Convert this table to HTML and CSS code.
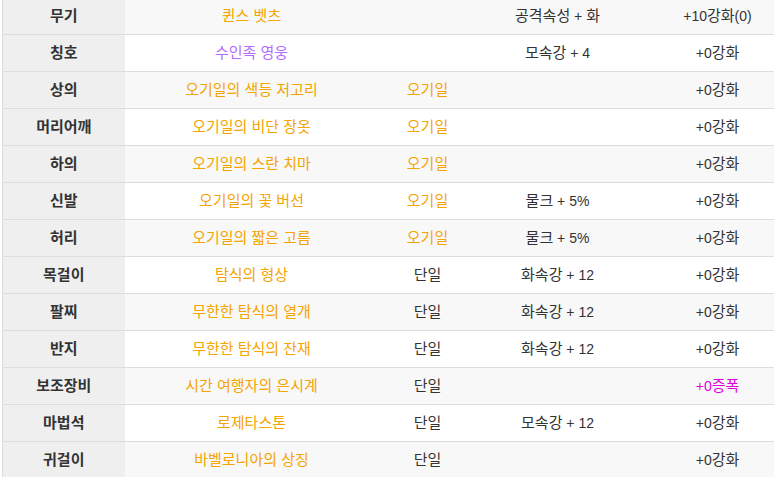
FILE: index.html
```html
<!DOCTYPE html>
<html lang="ko">
<head>
<meta charset="utf-8">
<link rel="stylesheet" href="styles.css">
</head>
<body>
<table class="equip">
  <colgroup>
    <col class="c1"><col class="c2"><col class="c3"><col class="c4"><col class="c5">
  </colgroup>
  <tbody>
    <tr><th>무기</th><td class="epic">퀸스 벳츠</td><td></td><td>공격속성<span class="n"> + </span>화</td><td><span class="n">+10</span>강화<span class="n">(0)</span></td></tr>
    <tr><th>칭호</th><td class="rare">수인족 영웅</td><td></td><td>모속강<span class="n"> + 4</span></td><td><span class="n">+0</span>강화</td></tr>
    <tr><th>상의</th><td class="epic">오기일의 색등 저고리</td><td class="epic">오기일</td><td></td><td><span class="n">+0</span>강화</td></tr>
    <tr><th>머리어깨</th><td class="epic">오기일의 비단 장옷</td><td class="epic">오기일</td><td></td><td><span class="n">+0</span>강화</td></tr>
    <tr><th>하의</th><td class="epic">오기일의 스란 치마</td><td class="epic">오기일</td><td></td><td><span class="n">+0</span>강화</td></tr>
    <tr><th>신발</th><td class="epic">오기일의 꽃 버선</td><td class="epic">오기일</td><td>물크<span class="n"> + 5%</span></td><td><span class="n">+0</span>강화</td></tr>
    <tr><th>허리</th><td class="epic">오기일의 짧은 고름</td><td class="epic">오기일</td><td>물크<span class="n"> + 5%</span></td><td><span class="n">+0</span>강화</td></tr>
    <tr><th>목걸이</th><td class="epic">탐식의 형상</td><td>단일</td><td>화속강<span class="n"> + 12</span></td><td><span class="n">+0</span>강화</td></tr>
    <tr><th>팔찌</th><td class="epic">무한한 탐식의 열개</td><td>단일</td><td>화속강<span class="n"> + 12</span></td><td><span class="n">+0</span>강화</td></tr>
    <tr><th>반지</th><td class="epic">무한한 탐식의 잔재</td><td>단일</td><td>화속강<span class="n"> + 12</span></td><td><span class="n">+0</span>강화</td></tr>
    <tr><th>보조장비</th><td class="epic">시간 여행자의 은시계</td><td>단일</td><td></td><td class="amp"><span class="n">+0</span>증폭</td></tr>
    <tr><th>마법석</th><td class="epic">로제타스톤</td><td>단일</td><td>모속강<span class="n"> + 12</span></td><td><span class="n">+0</span>강화</td></tr>
    <tr><th>귀걸이</th><td class="epic">바벨로니아의 상징</td><td>단일</td><td></td><td><span class="n">+0</span>강화</td></tr>
  </tbody>
</table>
</body>
</html>
```
FILE: styles.css
```css
html, body {
  margin: 0;
  padding: 0;
  overflow: hidden;
  background: #ffffff;
}
body {
  font-family: "Liberation Sans", "Noto Sans CJK KR", sans-serif;
  font-size: 15px;
  color: #333333;
}
.equip {
  border-collapse: collapse;
  table-layout: fixed;
  width: 794px;
  margin: -2px 0 0 2px;
}
.c1 { width: 122px; }
.c2 { width: 254px; }
.c3 { width: 98px; }
.c4 { width: 162px; }
.c5 { width: 158px; }
.equip th,
.equip td {
  height: 36px;
  padding: 0;
  text-align: center;
  vertical-align: middle;
  border-bottom: 1px solid #dddddd;
  line-height: 18px;
  white-space: nowrap;
}
.equip th {
  background: #efefef;
  font-weight: bold;
  color: #333333;
  border-left: 1px solid #dddddd;
}
.equip tr:nth-child(odd) td {
  background: #f8f8f8;
}
.equip tr:nth-child(even) td {
  background: #ffffff;
}
.n { font-size: 14px; }
.epic { color: #f5a400; }
.rare { color: #b36bff; }
.amp { color: #e000e0; }
```
